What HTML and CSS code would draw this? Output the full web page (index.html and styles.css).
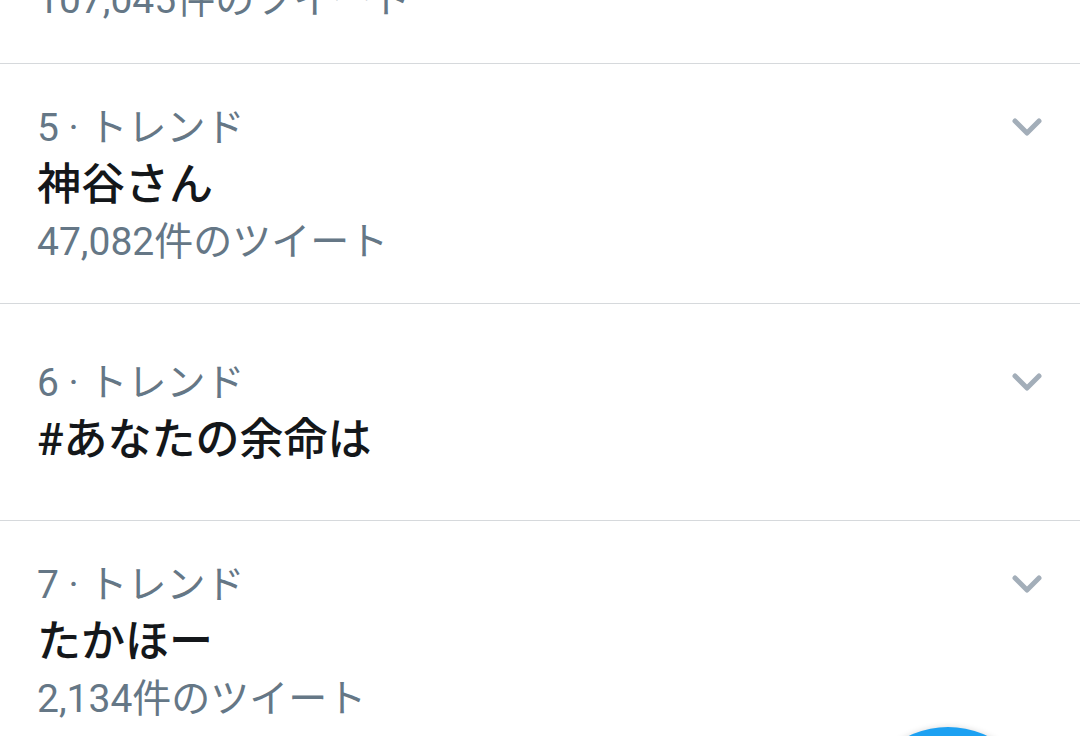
FILE: index.html
```html
<!DOCTYPE html>
<html lang="ja">
<head>
<meta charset="utf-8">
<link rel="stylesheet" href="styles.css">
</head>
<body>
<div class="screen">
  <div class="list">
    <div class="trend trend-cut">
      <div class="count">107,045件のツイート</div>
    </div>
    <div class="trend">
      <div class="body">
        <div class="meta">5 · トレンド</div>
        <div class="title">神谷さん</div>
        <div class="count">47,082件のツイート</div>
      </div>
      <svg class="chev" viewBox="0 0 34 24"><path d="M5 5 L17 17 L29 5"/></svg>
    </div>
    <div class="trend trend-short">
      <div class="body">
        <div class="meta">6 · トレンド</div>
        <div class="title">#あなたの余命は</div>
      </div>
      <svg class="chev" viewBox="0 0 34 24"><path d="M5 5 L17 17 L29 5"/></svg>
    </div>
    <div class="trend">
      <div class="body">
        <div class="meta">7 · トレンド</div>
        <div class="title">たかほー</div>
        <div class="count">2,134件のツイート</div>
      </div>
      <svg class="chev" viewBox="0 0 34 24"><path d="M5 5 L17 17 L29 5"/></svg>
    </div>
  </div>
  <div class="fab"></div>
</div>
</body>
</html>
```
FILE: styles.css
```css
html, body {
  margin: 0;
  padding: 0;
  background: #ffffff;
}
.screen {
  position: relative;
  width: 1080px;
  height: 736px;
  overflow: hidden;
  font-family: Roboto, "Noto Sans CJK JP", sans-serif;
}
.list {
  margin-top: -28px;
}
.trend {
  display: flex;
  align-items: flex-start;
  padding: 36px 36px 33px 37px;
  border-bottom: 1px solid #d6d9dc;
}
.trend-cut {
  padding-top: 0;
  padding-bottom: 35px;
}
.trend-short {
  padding-top: 51px;
  padding-bottom: 51px;
}
.body {
  flex: 1;
}
.meta {
  font-size: 39px;
  line-height: 56px;
  color: #657786;
}
.title {
  font-size: 44px;
  line-height: 58px;
  font-weight: 500;
  color: #14171a;
}
.count {
  font-size: 39px;
  line-height: 56px;
  color: #657786;
}
.chev {
  width: 34px;
  height: 24px;
  margin-top: 16px;
  fill: none;
  stroke: #a3aeb9;
  stroke-width: 5;
  stroke-linecap: round;
  stroke-linejoin: round;
}
.fab {
  position: absolute;
  left: 858px;
  top: 727px;
  width: 180px;
  height: 180px;
  border-radius: 50%;
  background: #1da1f2;
  box-shadow: 0 0 6px rgba(0,0,0,0.15);
}
```
